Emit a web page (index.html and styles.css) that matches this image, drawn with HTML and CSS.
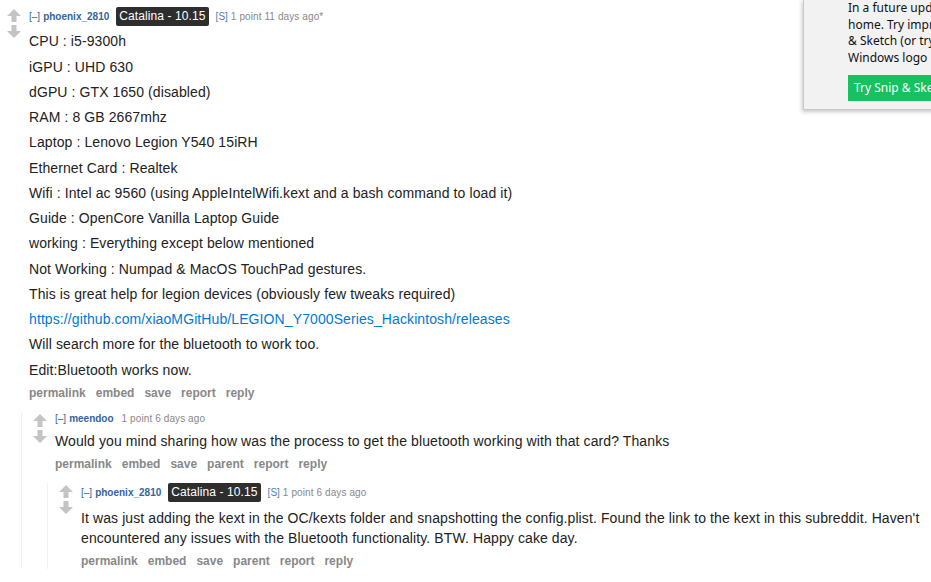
FILE: index.html
```html
<!DOCTYPE html>
<html>
<head>
<meta charset="utf-8">
<link rel="stylesheet" href="styles.css">
</head>
<body>
<div class="thread">
  <div class="comment">
    <div class="row">
      <div class="votes">
        <svg class="arrow" viewBox="0 0 14 13"><polygon points="7,0 14,7 9.5,7 9.5,13 4.5,13 4.5,7 0,7"/></svg>
        <svg class="arrow" viewBox="0 0 14 13"><polygon points="4.5,0 9.5,0 9.5,6 14,6 7,13 0,6 4.5,6"/></svg>
      </div>
      <div class="entry">
        <div class="tagline">
          <span class="expand">[–]</span>
          <span class="author">phoenix_2810</span>
          <span class="flair">Catalina - 10.15</span>
          <span class="sub">[S]</span>
          <span class="score">1 point 11 days ago*</span>
        </div>
        <div class="md">
          <p>CPU : i5-9300h</p>
          <p>iGPU : UHD 630</p>
          <p>dGPU : GTX 1650 (disabled)</p>
          <p>RAM : 8 GB 2667mhz</p>
          <p>Laptop : Lenovo Legion Y540 15iRH</p>
          <p>Ethernet Card : Realtek</p>
          <p>Wifi : Intel ac 9560 (using AppleIntelWifi.kext and a bash command to load it)</p>
          <p>Guide : OpenCore Vanilla Laptop Guide</p>
          <p>working : Everything except below mentioned</p>
          <p>Not Working : Numpad &amp; MacOS TouchPad gestures.</p>
          <p>This is great help for legion devices (obviously few tweaks required)</p>
          <p><a href="#">https://github.com/xiaoMGitHub/LEGION_Y7000Series_Hackintosh/releases</a></p>
          <p>Will search more for the bluetooth to work too.</p>
          <p>Edit:Bluetooth works now.</p>
        </div>
        <ul class="buttons">
          <li>permalink</li><li>embed</li><li>save</li><li>report</li><li>reply</li>
        </ul>
      </div>
    </div>
    <div class="child">
      <div class="comment">
        <div class="row">
          <div class="votes">
            <svg class="arrow" viewBox="0 0 14 13"><polygon points="7,0 14,7 9.5,7 9.5,13 4.5,13 4.5,7 0,7"/></svg>
            <svg class="arrow" viewBox="0 0 14 13"><polygon points="4.5,0 9.5,0 9.5,6 14,6 7,13 0,6 4.5,6"/></svg>
          </div>
          <div class="entry">
            <div class="tagline">
              <span class="expand">[–]</span>
              <span class="author">meendoo</span>
              <span class="score gap">1 point 6 days ago</span>
            </div>
            <div class="md">
              <p>Would you mind sharing how was the process to get the bluetooth working with that card? Thanks</p>
            </div>
            <ul class="buttons">
              <li>permalink</li><li>embed</li><li>save</li><li>parent</li><li>report</li><li>reply</li>
            </ul>
          </div>
        </div>
        <div class="child">
          <div class="comment">
            <div class="row">
              <div class="votes">
                <svg class="arrow" viewBox="0 0 14 13"><polygon points="7,0 14,7 9.5,7 9.5,13 4.5,13 4.5,7 0,7"/></svg>
                <svg class="arrow" viewBox="0 0 14 13"><polygon points="4.5,0 9.5,0 9.5,6 14,6 7,13 0,6 4.5,6"/></svg>
              </div>
              <div class="entry">
                <div class="tagline">
                  <span class="expand">[–]</span>
                  <span class="author">phoenix_2810</span>
                  <span class="flair">Catalina - 10.15</span>
                  <span class="sub">[S]</span>
                  <span class="score">1 point 6 days ago</span>
                </div>
                <div class="md">
                  <p>It was just adding the kext in the OC/kexts folder and snapshotting the config.plist. Found the link to the kext in this subreddit. Haven't encountered any issues with the Bluetooth functionality. BTW. Happy cake day.</p>
                </div>
                <ul class="buttons">
                  <li>permalink</li><li>embed</li><li>save</li><li>parent</li><li>report</li><li>reply</li>
                </ul>
              </div>
            </div>
          </div>
        </div>
      </div>
    </div>
  </div>
</div>

<div class="toast">
  <p class="toast-text">In a future upda</p>
  <p class="toast-text">home. Try impro</p>
  <p class="toast-text">&amp; Sketch (or try</p>
  <p class="toast-text">Windows logo</p>
  <div class="toast-btn">Try Snip &amp; Sket</div>
</div>
</body>
</html>
```

FILE: styles.css
```css
html, body {
  margin: 0;
  padding: 0;
  background: #fff;
  overflow: hidden;
}

body {
  width: 931px;
  height: 582px;
  position: relative;
  font-family: "Liberation Sans", Arial, sans-serif;
  color: #222;
}

.thread {
  padding: 7px 0 0 7px;
}

.row {
  display: flex;
  align-items: flex-start;
}

.votes {
  width: 22px;
  flex: none;
  display: flex;
  flex-direction: column;
  padding-top: 2px;
}

.arrow {
  width: 14px;
  height: 13px;
  fill: #c4c4c4;
  display: block;
}

.arrow + .arrow {
  margin-top: 3px;
}

.entry {
  flex: 1;
  min-width: 0;
}

.tagline {
  display: flex;
  align-items: center;
  font-size: 10px;
  line-height: 14px;
  color: #888;
}

.expand {
  color: #369;
  margin-right: 3px;
}

.author {
  color: #369;
  font-weight: bold;
}

.flair {
  background: #2e2e2e;
  color: #fff;
  font-size: 12px;
  line-height: 19px;
  padding: 0 3px;
  letter-spacing: 0.1px;
  border-radius: 2px;
  margin-left: 7px;
  margin-right: 7px;
}

.sub {
  color: #4f7cb5;
  margin-right: 3px;
}

.score {
  letter-spacing: 0.1px;
}

.score.gap {
  margin-left: 8px;
}

.md {
  font-size: 14px;
  color: #222;
  letter-spacing: 0.1px;
}

.md p {
  margin: 5.25px 0;
  line-height: 20px;
}

.md a {
  color: #0079d3;
  text-decoration: none;
}

.buttons {
  list-style: none;
  margin: 0;
  padding: 0;
  display: flex;
  gap: 10px;
  font-size: 12px;
  line-height: 16px;
  font-weight: bold;
  color: #888;
}

.child {
  margin-left: 14px;
  margin-top: 11px;
  border-left: 1px solid #f1f1f1;
  padding-left: 11px;
}

.toast {
  position: absolute;
  left: 803px;
  top: -1px;
  width: 140px;
  height: 111px;
  background: #f2f2f2;
  border: 1px solid #c8c8c8;
  border-right: none;
  box-shadow: -1px 2px 4px rgba(0, 0, 0, 0.22);
  box-sizing: border-box;
  padding: 0 0 0 44px;
  font-family: "Noto Sans", "Open Sans", sans-serif;
}

.toast-text {
  margin: 0;
  font-size: 12px;
  line-height: 16.7px;
  color: #111;
  white-space: nowrap;
}

.toast-btn {
  margin-top: 8px;
  background: #17c15f;
  color: #fff;
  font-size: 12px;
  line-height: 26px;
  padding-left: 6px;
  white-space: nowrap;
}
```
